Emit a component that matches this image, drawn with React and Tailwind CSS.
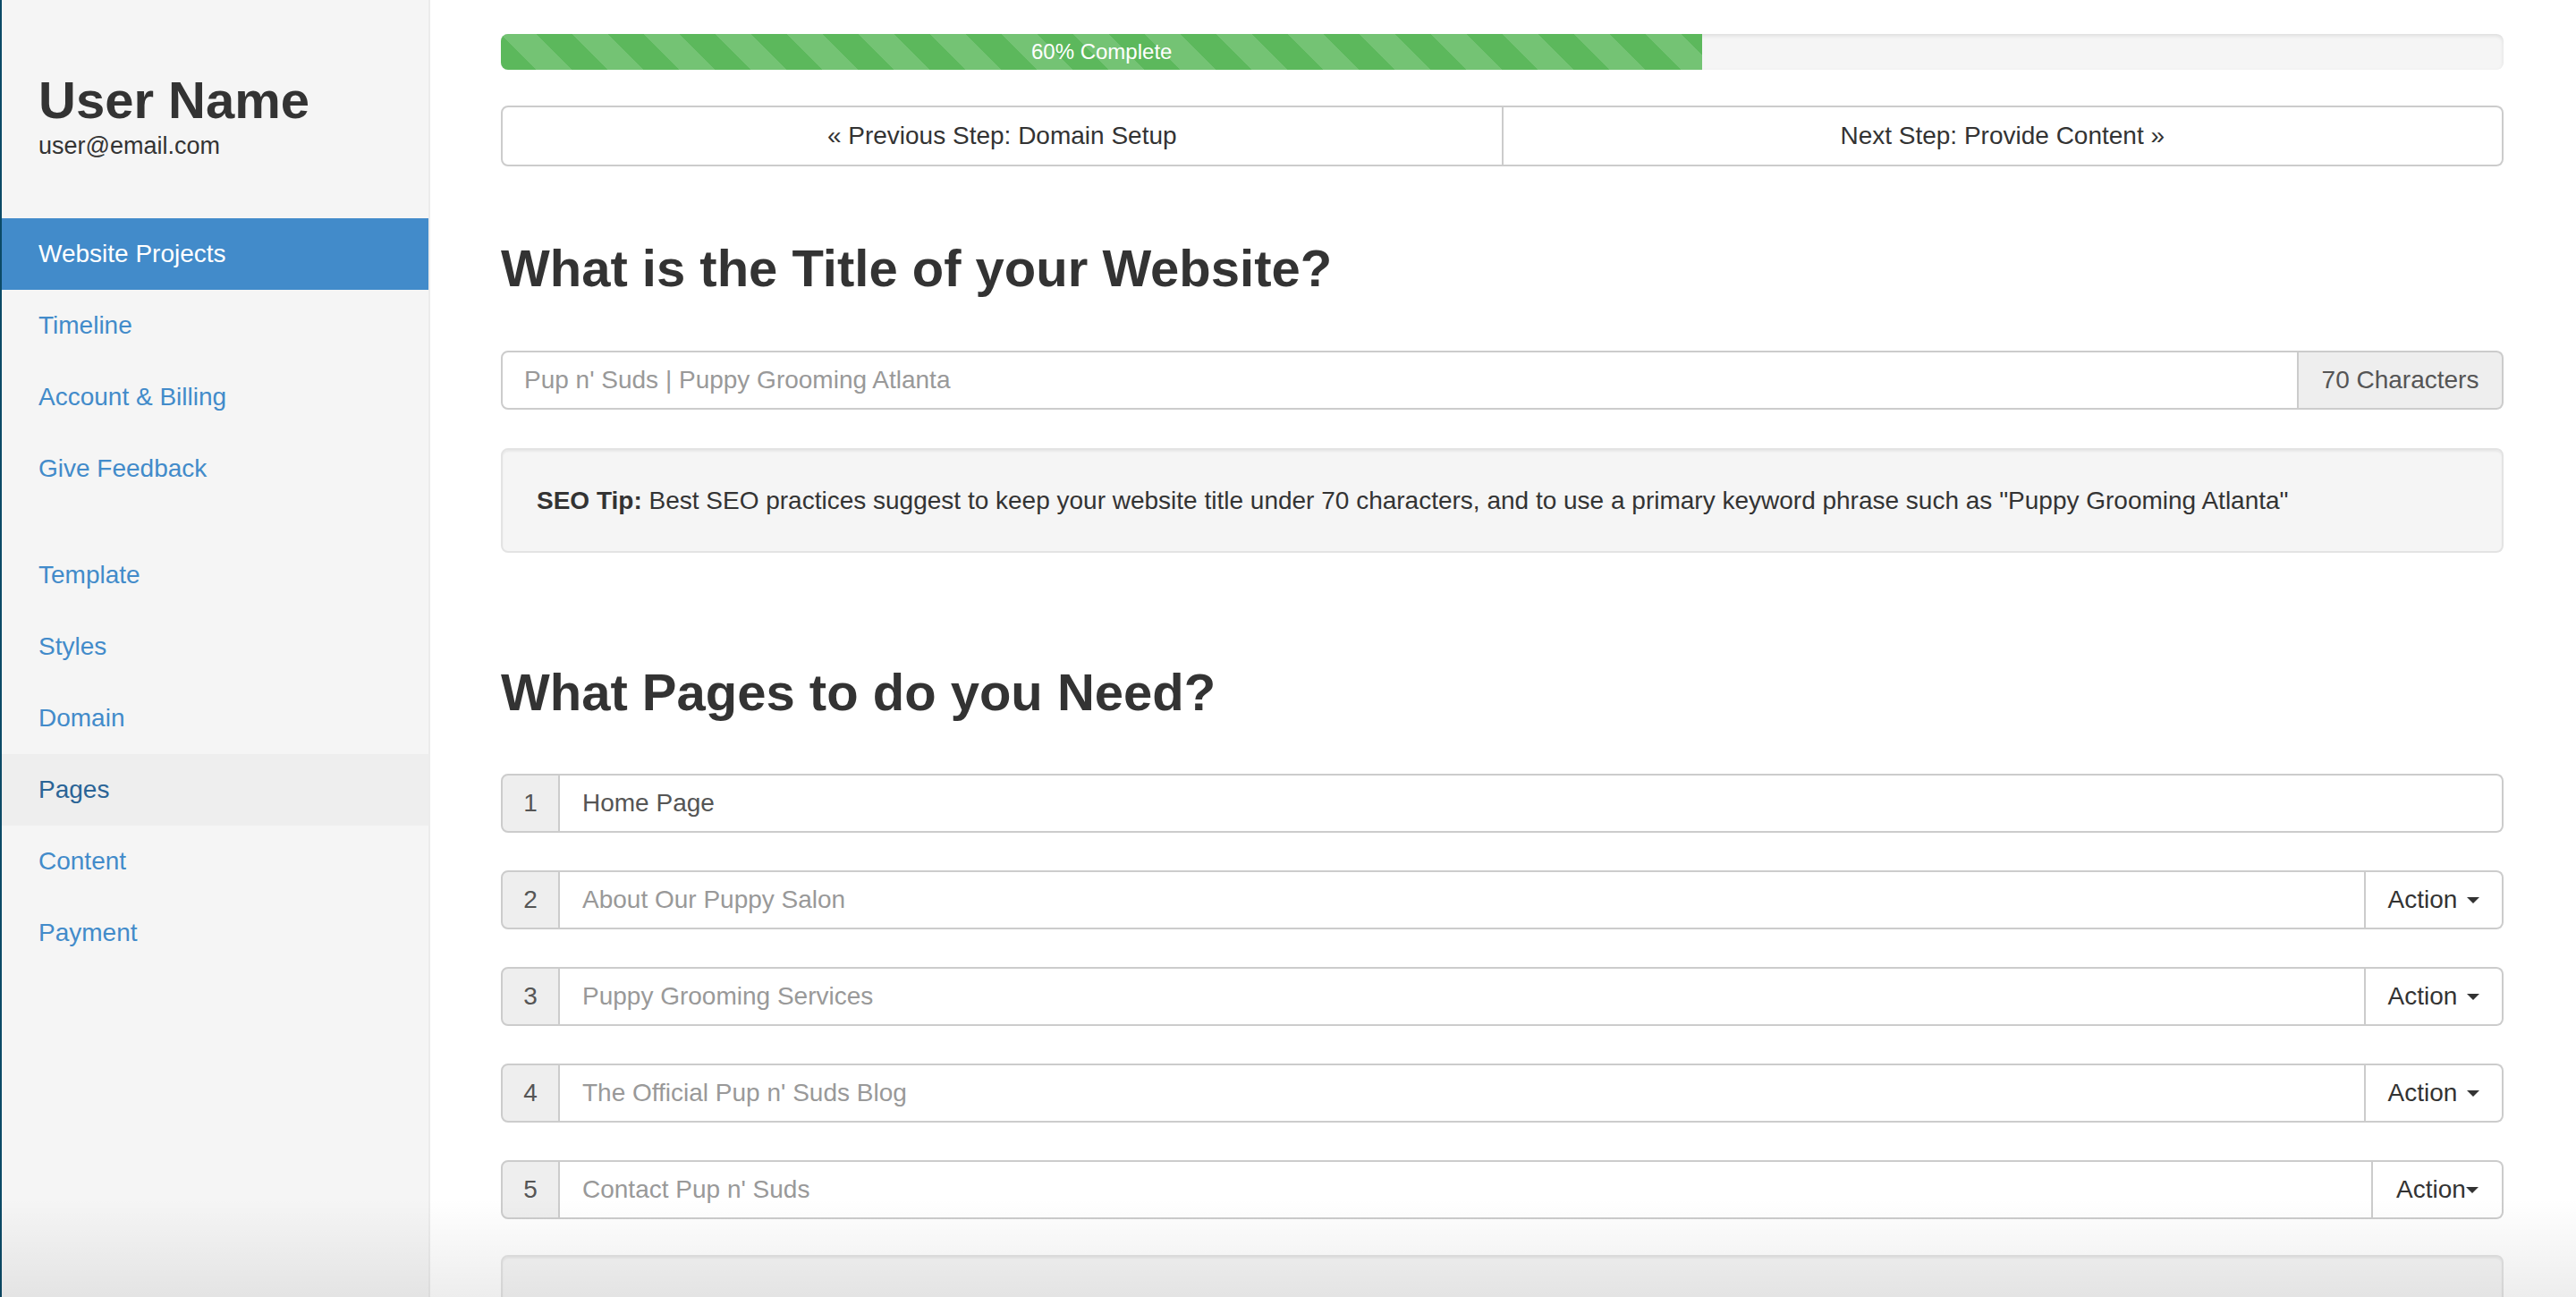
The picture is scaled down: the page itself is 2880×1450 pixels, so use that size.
import React from "react";

const projectLinks = ["Timeline", "Account & Billing", "Give Feedback"];
const stepLinks = ["Template", "Styles", "Domain", "Pages", "Content", "Payment"];

const pages = [
  { n: 1, value: "Home Page", fixed: true },
  { n: 2, placeholder: "About Our Puppy Salon" },
  { n: 3, placeholder: "Puppy Grooming Services" },
  { n: 4, placeholder: "The Official Pup n' Suds Blog" },
  { n: 5, placeholder: "Contact Pup n' Suds", tight: true },
];

const Caret = () => (
  <span className="inline-block w-0 h-0 border-t-[7px] border-x-[7px] border-x-transparent border-t-[#333]" />
);

const PageRow = ({ page }) => (
  <div className="flex h-[66px]">
    <div className="w-[66px] shrink-0 flex items-center justify-center bg-[#eee] border-2 border-[#ccc] rounded-l-[8px] text-[28px] text-[#555]">
      {page.n}
    </div>
    <input
      readOnly
      defaultValue={page.value}
      placeholder={page.placeholder}
      className={`flex-1 min-w-0 border-2 border-l-0 border-[#ccc] bg-white pl-[25px] text-[28px] text-[#555] placeholder:text-[#999] outline-none ${
        page.fixed ? "rounded-r-[8px]" : ""
      }`}
    />
    {!page.fixed && (
      <button
        className={`shrink-0 flex items-center justify-center border-2 border-l-0 border-[#ccc] bg-white rounded-r-[8px] text-[28px] text-[#333] ${
          page.tight ? "w-[146px]" : "w-[154px] gap-[11px]"
        }`}
      >
        Action
        <Caret />
      </button>
    )}
  </div>
);

const App = () => {
  const progress = 60;

  return (
    <div className="relative flex h-screen overflow-hidden bg-white text-[#333] font-['Liberation_Sans',Arial,sans-serif]">
      <div className="w-[2px] shrink-0 bg-[#0b4a66]" />

      <aside className="w-[479px] shrink-0 bg-[#f5f5f5] border-r-2 border-[#ececec]">
        <div className="h-[244px] pt-[80px] pl-[41px]">
          <h1 className="text-[58px] leading-[64px] font-bold">User Name</h1>
          <p className="text-[27px] leading-[38px]">user@email.com</p>
        </div>
        <nav className="text-[28px]">
          <a className="flex items-center h-[80px] pl-[41px] bg-[#428bca] text-white">
            Website Projects
          </a>
          {projectLinks.map((l) => (
            <a key={l} className="flex items-center h-[80px] pl-[41px] text-[#428bca]">
              {l}
            </a>
          ))}
          <div className="h-[39px]" />
          {stepLinks.map((l) => (
            <a
              key={l}
              className={`flex items-center h-[80px] pl-[41px] ${
                l === "Pages" ? "bg-[#eee] text-[#2a6496]" : "text-[#428bca]"
              }`}
            >
              {l}
            </a>
          ))}
        </nav>
      </aside>

      <main className="flex-1 pl-[79px] pr-[81px] pt-[38px]">
        {/* progress */}
        <div className="h-[40px] rounded-[8px] bg-[#f5f5f5] shadow-[inset_0_2px_4px_rgba(0,0,0,0.1)] overflow-hidden">
          <div
            className="h-full bg-[#5cb85c] bg-[linear-gradient(45deg,rgba(255,255,255,.15)_25%,transparent_25%,transparent_50%,rgba(255,255,255,.15)_50%,rgba(255,255,255,.15)_75%,transparent_75%,transparent)] bg-size-[80px_80px] text-center text-white text-[24px] leading-[40px]"
            style={{ width: progress + "%" }}
          >
            {progress}% Complete
          </div>
        </div>

        {/* step buttons */}
        <div className="mt-[40px] flex h-[68px]">
          <button className="flex-1 border-2 border-[#ccc] rounded-l-[8px] bg-white text-[28px] text-[#333]">
            « Previous Step: Domain Setup
          </button>
          <button className="flex-1 border-2 border-l-0 border-[#ccc] rounded-r-[8px] bg-white text-[28px] text-[#333]">
            Next Step: Provide Content »
          </button>
        </div>

        <h2 className="mt-[82px] text-[58px] leading-[64px] font-bold">
          What is the Title of your Website?
        </h2>

        <div className="mt-[60px] flex h-[66px]">
          <input
            readOnly
            placeholder="Pup n' Suds | Puppy Grooming Atlanta"
            className="flex-1 min-w-0 border-2 border-[#ccc] rounded-l-[8px] bg-white pl-[24px] text-[28px] placeholder:text-[#999] outline-none"
          />
          <div className="w-[229px] shrink-0 flex items-center justify-center bg-[#eee] border-2 border-l-0 border-[#ccc] rounded-r-[8px] text-[28px] text-[#555]">
            70 Characters
          </div>
        </div>

        <div className="mt-[43px] h-[117px] flex items-center px-[38px] bg-[#f5f5f5] border-2 border-[#e3e3e3] rounded-[8px] shadow-[inset_0_2px_2px_rgba(0,0,0,0.05)] text-[28px]">
          <p>
            <b>SEO Tip:</b> Best SEO practices suggest to keep your website title under 70 characters, and to use a primary keyword phrase such as "Puppy Grooming Atlanta"
          </p>
        </div>

        <h2 className="mt-[124px] text-[58px] leading-[64px] font-bold">
          What Pages to do you Need?
        </h2>

        <div className="mt-[59px] flex flex-col gap-[42px]">
          {pages.map((p) => (
            <PageRow key={p.n} page={p} />
          ))}
        </div>

        <div className="mt-[40px] h-[200px] bg-[#f5f5f5] border-2 border-[#e3e3e3] rounded-[8px] shadow-[inset_0_2px_2px_rgba(0,0,0,0.05)]" />
      </main>

      {/* window bottom fade */}
      <div className="pointer-events-none absolute left-0 right-0 bottom-0 h-[110px] bg-linear-to-b from-transparent to-[rgba(0,0,0,0.07)]" />
    </div>
  );
};

export default App;
